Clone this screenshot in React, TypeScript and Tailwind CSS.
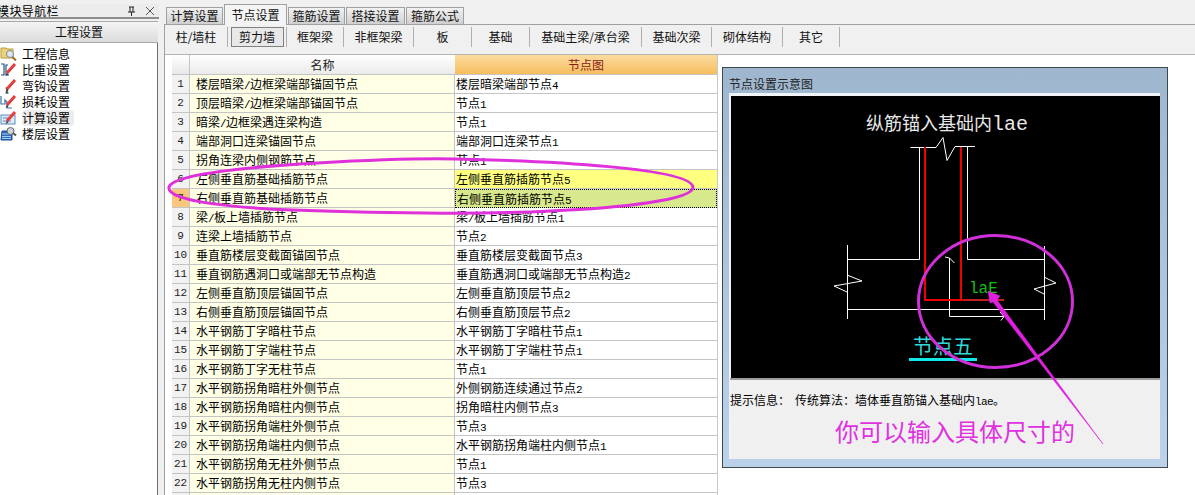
const FONT = "font-['Noto_Sans_CJK_SC','Noto_Sans',sans-serif]";

const topTabs = [
  { label: "计算设置", width: "w-[57px]" },
  { label: "节点设置", width: "w-[63px]", active: true },
  { label: "箍筋设置", width: "w-[57px]" },
  { label: "搭接设置", width: "w-[59px]" },
  { label: "箍筋公式", width: "w-[58px]" },
];

const subTabs = [
  { label: "柱/墙柱", width: "w-[63px]" },
  { label: "剪力墙", width: "w-[59px]", active: true },
  { label: "框架梁", width: "w-[57px]" },
  { label: "非框架梁", width: "w-[70px]" },
  { label: "板", width: "w-[58px]" },
  { label: "基础", width: "w-[58px]" },
  { label: "基础主梁/承台梁", width: "w-[112px]" },
  { label: "基础次梁", width: "w-[70px]" },
  { label: "砌体结构", width: "w-[71px]" },
  { label: "其它", width: "w-[57px]" },
];

const rows = [
  ["楼层暗梁/边框梁端部锚固节点", "楼层暗梁端部节点4"],
  ["顶层暗梁/边框梁端部锚固节点", "节点1"],
  ["暗梁/边框梁遇连梁构造", "节点1"],
  ["端部洞口连梁锚固节点", "端部洞口连梁节点1"],
  ["拐角连梁内侧钢筋节点", "节点1"],
  ["左侧垂直筋基础插筋节点", "左侧垂直筋插筋节点5"],
  ["右侧垂直筋基础插筋节点", "右侧垂直筋插筋节点5"],
  ["梁/板上墙插筋节点", "梁/板上墙插筋节点1"],
  ["连梁上墙插筋节点", "节点2"],
  ["垂直筋楼层变截面锚固节点", "垂直筋楼层变截面节点3"],
  ["垂直钢筋遇洞口或端部无节点构造", "垂直筋遇洞口或端部无节点构造2"],
  ["左侧垂直筋顶层锚固节点", "左侧垂直筋顶层节点2"],
  ["右侧垂直筋顶层锚固节点", "右侧垂直筋顶层节点2"],
  ["水平钢筋丁字暗柱节点", "水平钢筋丁字暗柱节点1"],
  ["水平钢筋丁字端柱节点", "水平钢筋丁字端柱节点1"],
  ["水平钢筋丁字无柱节点", "节点1"],
  ["水平钢筋拐角暗柱外侧节点", "外侧钢筋连续通过节点2"],
  ["水平钢筋拐角暗柱内侧节点", "拐角暗柱内侧节点3"],
  ["水平钢筋拐角端柱外侧节点", "节点3"],
  ["水平钢筋拐角端柱内侧节点", "水平钢筋拐角端柱内侧节点1"],
  ["水平钢筋拐角无柱外侧节点", "节点1"],
  ["水平钢筋拐角无柱内侧节点", "节点3"],
  ["", ""],
];

// SimSun has half-width latin, so digits and slashes get a narrow mono span
const Mixed = ({ text }: { text: string }) => (
  <>
    {text.split(/([A-Za-z0-9/]+)/).map((part, i) =>
      /^[A-Za-z0-9/]+$/.test(part) ? (
        <span key={i} className="font-['Liberation_Mono',monospace] text-[11px] tracking-[-0.6px]">
          {part}
        </span>
      ) : (
        part
      ),
    )}
  </>
);

const Pencil = () => (
  <g>
    <path d="M7 11 15 2" stroke="#e2403c" strokeWidth="3" />
    <path d="M7 11 5.500 14 8.500 12.500Z" fill="#333" />
  </g>
);

const NavIcon = ({ kind }: { kind: number }) => (
  <svg width="17" height="16" viewBox="0 0 17 16" fill="none" className="shrink-0">
    {kind === 0 && (
      <>
        <path d="M1 2h5l1 1h6v9H1Z" fill="#ecd27c" stroke="#b89a40" />
        <circle cx="10" cy="8" r="3.500" fill="#dfe8f0" stroke="#808890" />
        <path d="m12.500 11 3.500 3.500" stroke="#a06a20" strokeWidth="2" />
      </>
    )}
    {kind === 1 && (
      <>
        <path d="M1 2h3v11H1M8 3H6v10h3" stroke="#23508c" strokeWidth="1.200" />
        <Pencil />
      </>
    )}
    {kind === 2 && (
      <>
        <path d="M7 10v5M5.500 10h3M5.500 15h3" stroke="#222" strokeWidth="1.200" />
        <Pencil />
      </>
    )}
    {kind === 3 && (
      <>
        <path d="M1 2v8h4V6l2 2v6h5" stroke="#3c6ea8" strokeWidth="1.200" />
        <Pencil />
      </>
    )}
    {kind === 4 && (
      <>
        <rect x="1" y="5" width="14" height="9" fill="#dcebf8" stroke="#5c8cc0" />
        <path d="M3 8h6M3 11h8" stroke="#5c8cc0" />
        <Pencil />
      </>
    )}
    {kind === 5 && (
      <>
        <path d="M2 5h10v9H1Z" fill="#2f6cc0" stroke="#1c4c90" />
        <path d="M2 8h9M2 10.500h9M2 12.500h9" stroke="#a8cdf0" />
        <circle cx="10.500" cy="5" r="3.500" fill="#cfd4d8" stroke="#60686e" />
        <path d="m13 7 3 2.500" stroke="#50585e" strokeWidth="2" />
      </>
    )}
  </svg>
);

const navItems = ["工程信息", "比重设置", "弯钩设置", "损耗设置", "计算设置", "楼层设置"];

const NavPanel = () => (
  <aside className="flex h-full w-[159px] shrink-0 flex-col bg-[#f0f0f0]">
    <div className="mt-1 flex h-[15px] items-center justify-between overflow-hidden border-b-2 border-[#8c8c8c] bg-[#ececec] pr-1 pl-0 text-[12px] leading-[13px]">
      <span className="-ml-[3px] tracking-[0.4px]">模块导航栏</span>
      <span className="flex items-center gap-[9px] text-[#333]">
        <svg width="9" height="10" viewBox="0 0 9 10" fill="none">
          <path d="M2 1h5M3 1v5M6 1v5M1 6h7M4.500 6v4" stroke="#222" />
        </svg>
        <svg width="10" height="10" viewBox="0 0 10 10" fill="none">
          <path d="m1 1 8 8M9 1 1 9" stroke="#555" />
        </svg>
      </span>
    </div>
    <div className="mt-[2px] mr-[1px] flex h-[22px] items-center justify-center border-y border-[#a8a8a8] bg-gradient-to-b from-[#f4f4f4] to-[#dcdcdc] text-[12px] text-[#111]">
      工程设置
    </div>
    <div className="mr-[1px] flex-1 border-r border-[#6e6e6e] bg-white pt-[3px]">
      {navItems.map((item, i) => (
        <div key={item} className="flex h-4 items-center gap-[5px] text-[12px] leading-4 text-black">
          <NavIcon kind={i} />
          <span className={i === 4 ? "rounded-sm bg-[#ececec] pr-1" : ""}>{item}</span>
        </div>
      ))}
    </div>
  </aside>
);

const NodeDiagram = () => (
  <svg viewBox="731 96 429 282" className="block h-[282px] w-[429px] bg-black" fill="none">
    <text x="866" y="130" fill="#e8e8e8" fontSize="18" fontFamily="'Noto Sans CJK SC'">
      纵筋锚入基础内<tspan fontFamily="'Liberation Mono'" fontSize="20">lae</tspan>
    </text>
    <g stroke="#fff" strokeWidth="1">
      <path d="M910.500 147.500H936l7-10 4 23 8-14h20" />
      <path d="M919.500 147v112.500H847.500M847.500 245v74" />
      <path d="M967.500 147v112.500H1044.500M1044.500 246v74" />
      <path d="M847 309.500H1044.500" />
      <path d="M847 275l15 6-28 5 13 6M1044 277l12 6-22 6 10 5" />
      <path d="M949.500 258v58.500H1004M945 257l4.500 1 5 5M1000 312l4 4.500-3 4" />
    </g>
    <path d="M925 147V300H967M961 147V300" stroke="#f00000" strokeWidth="2" />
    <path d="M965 300H1004" stroke="#c02020" strokeWidth="2" />
    <text x="969" y="293" fill="#10c010" fontSize="16" fontFamily="'Liberation Mono'">
      laE
    </text>
    <text x="913" y="354" fill="#30d8d8" fontSize="20" fontFamily="'Noto Sans CJK SC'">
      节点五
    </text>
    <path d="M909 359.500H977" stroke="#10e8e8" strokeWidth="3" />
  </svg>
);

const Annotations = () => (
  <div className="pointer-events-none absolute inset-0">
    <svg viewBox="0 0 1195 495" className="absolute inset-0 h-[495px] w-[1195px]" fill="none">
      <path
        d="M169 187C172 176 230 168 317 163C370 160 410 158 455 159C550 161 690 168 693 187C694 200 620 208 550 211C500 214 400 214 293 210C240 208 166 202 169 187Z"
        stroke="#e030dc"
        strokeWidth="3"
      />
      <ellipse cx="995.500" cy="301.500" rx="77" ry="66" stroke="#d030d8" strokeWidth="3" />
      <path d="M988 291 1000 296 997 300 1103 444 993 302 990 303Z" fill="#e020e0" stroke="#e020e0" strokeWidth="0.500" />
    </svg>
    <span className="absolute top-[414px] left-[835px] text-[24px] leading-[34px] text-[#e030e0]">你可以输入具体尺寸的</span>
  </div>
);

const SettingsPanel = () => (
  <section className="mt-[12px] flex h-[401px] w-[446px] shrink-0 flex-col border border-[#3c4a50] bg-gradient-to-b from-[#9fb6cf] to-[#bcd2ea] pr-[7px] pb-2 pl-[6px]">
    <div className="flex h-[25px] shrink-0 items-end pb-[2px] text-[12px] leading-[14px] text-[#222]">节点设置示意图</div>
    <div className="flex-1 border-t-[3px] border-l-2 border-[#f0f4f8] bg-[#f0f0f0]">
      <NodeDiagram />
      <div className="-ml-px border-t-2 border-[#9c9c9c] pt-[13px] text-[12px] leading-[14px] text-black">
        提示信息：<span className="ml-[5px]">传统算法：墙体垂直筋锚入基础内</span>
        <Mixed text="lae" />。
      </div>
    </div>
  </section>
);

const NodeTable = () => (
  <div className="h-[440px] w-[546px] shrink-0 overflow-hidden border-r border-[#c8c8c8] text-[12px] text-black">
    <div className="flex h-[20px]">
      <div className="w-[18px] border-r border-b border-[#c4c4c4] bg-gradient-to-b from-white to-[#e8e8e8]" />
      <div className="flex w-[265px] items-center justify-center border-b border-[#c4c4c4] bg-gradient-to-b from-white to-[#ebebeb] text-[#222]">
        名称
      </div>
      <div className="flex flex-1 items-center justify-center border-b border-[#c4c4c4] bg-gradient-to-b from-[#fbdc9f] to-[#f6bd5c] text-[#8a1c1c]">
        节点图
      </div>
    </div>
    {rows.map(([name, node], i) => (
      <div key={i} className="flex h-[19px] leading-[18px]">
        <div
          className={`w-[18px] border-r border-b border-[#c4c4c4] text-center font-['Liberation_Mono',monospace] text-[11px] text-[#222] ${
            i === 6 ? "bg-[#fbc77c]" : "bg-[#f2f2f2]"
          }`}
        >
          {i < 22 ? i + 1 : ""}
        </div>
        <div className="w-[265px] border-r border-b border-[#c4c4c4] bg-[#ffffe6] pl-[6px]">
          <Mixed text={name} />
        </div>
        <div
          className={`flex-1 pl-[1px] ${
            i === 5
              ? "border-b border-[#c4c4c4] bg-[#ffff80]"
              : i === 6
                ? "border border-dotted border-black bg-[#d8e88c] leading-[17px]"
                : "border-b border-[#c4c4c4] bg-white"
          }`}
        >
          <Mixed text={node} />
        </div>
      </div>
    ))}
  </div>
);

const SettingsTabs = () => (
  <main className="flex h-full min-w-0 flex-1 flex-col pl-[5px]">
    <div className="flex h-[24px] shrink-0 items-end gap-[1px] pl-[2px] text-[12px] text-[#111]">
      {topTabs.map((tab) => (
        <div
          key={tab.label}
          className={`flex items-center justify-center border border-b-0 border-[#a0a0a0] ${tab.width} ${
            tab.active ? "relative -mb-px h-[21px] bg-[#f4f4f4]" : "h-[17px] bg-gradient-to-b from-[#f2f2f2] to-[#cfcfcf]"
          }`}
        >
          {tab.label}
        </div>
      ))}
    </div>
    <div className="flex h-full flex-col border-t border-l border-[#a0a0a0]">
      <div className="flex h-[30px] shrink-0 items-start border-b border-[#b4b4b4] pt-[2px] text-[12px] text-[#111]">
        {subTabs.map((tab) => (
          <div key={tab.label} className={`flex h-[20px] items-center justify-center border-r border-[#b0b0b0] ${tab.width}`}>
            {tab.active ? (
              <span className="flex h-[20px] w-[53px] items-center justify-center border border-[#808080] bg-[#e8e8e8]">
                {tab.label}
              </span>
            ) : (
              tab.label
            )}
          </div>
        ))}
      </div>
      <div className="flex flex-1 gap-[4px] bg-white pl-[7px]">
        <NodeTable />
        <SettingsPanel />
      </div>
    </div>
  </main>
);

export default function App() {
  return (
    <div className={`relative flex h-[495px] w-[1195px] overflow-hidden bg-[#f0f0f0] ${FONT}`}>
      <NavPanel />
      <SettingsTabs />
      <Annotations />
    </div>
  );
}
